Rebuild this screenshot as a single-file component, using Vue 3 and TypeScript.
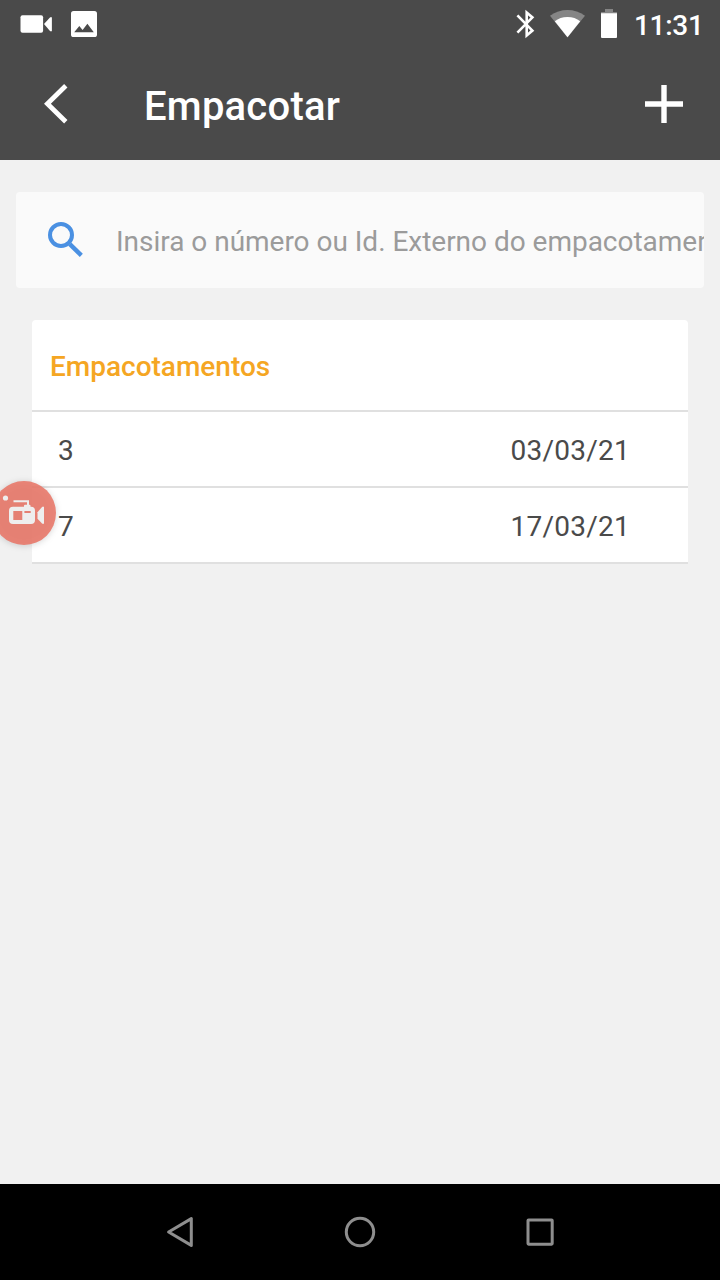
<script setup lang="ts">
interface Packing {
  id: number
  date: string
}

const packings: Packing[] = [
  { id: 3, date: '03/03/21' },
  { id: 7, date: '17/03/21' },
]
</script>

<template>
  <div class="screen">
    <div class="status">
      <div class="status-group notices">
        <svg width="32" height="20" viewBox="20 14 32 20" fill="#fff">
          <rect x="20.5" y="15.2" width="22.6" height="17.6" rx="2" />
          <path d="M44 24 50.2 17.2H51.9V31.3H50.2Z" />
        </svg>
        <svg width="26" height="26" viewBox="71 11 26 26">
          <rect x="71" y="11" width="26" height="26" rx="2.6" fill="#fff" />
          <path d="M74.2 32.2 79.3 26 82.6 30 87.4 23.8 93.8 32.2Z" fill="#4a4a4a" />
        </svg>
      </div>
      <div class="status-group system">
        <svg class="bluetooth" width="20" height="30" viewBox="516 9 20 30" fill="none" stroke="#fff" stroke-width="2.6">
          <path d="M517.4 15.4 532.4 30.6 526.7 35.5V12.5L532.4 17.4 517.4 32.6" />
        </svg>
        <svg class="wifi" width="36" height="28" viewBox="550 10 36 28">
          <path d="M567.5 37.5 550 15.8Q558 10 567.5 10T585 15.8Z" fill="#858585" />
          <path d="M567.5 37.2 554.8 21.3Q560 17 567.5 17T580.2 21.3Z" fill="#fff" />
        </svg>
        <svg class="battery" width="16" height="30" viewBox="601 9 16 30">
          <path d="M605 9H613V12H617V14H601V12H605Z" fill="#858585" />
          <path d="M601 13.3H617V37Q617 38 616 38H602Q601 38 601 37Z" fill="#fff" />
        </svg>
        <span class="clock">11:31</span>
      </div>
    </div>

    <header class="toolbar">
      <svg width="24" height="40" viewBox="44 84 24 40" fill="none" stroke="#fff" stroke-width="4.8">
        <path d="M65.8 85.8 47.4 103.8 65.8 121.8" />
      </svg>
      <h1>Empacotar</h1>
      <svg width="38" height="38" viewBox="0 0 38 38" fill="#fff">
        <path d="M16.3 0H21.7V16.3H38V21.7H21.7V38H16.3V21.7H0V16.3H16.3Z" />
      </svg>
    </header>

    <main>
      <div class="search">
        <svg width="36" height="36" viewBox="48 222 36 36" fill="none" stroke="#4a90e2" stroke-width="4">
          <circle cx="61" cy="235" r="11" />
          <path d="M69.8 244.2 81.3 255.4" stroke-width="4.4" />
        </svg>
        <span class="hint">Insira o número ou Id. Externo do empacotamento</span>
      </div>

      <section class="card">
        <h2>Empacotamentos</h2>
        <div v-for="item in packings" :key="item.id" class="row">
          <span>{{ item.id }}</span>
          <span>{{ item.date }}</span>
        </div>
      </section>
    </main>

    <svg class="recorder" width="64" height="76" viewBox="-8 475 64 76">
      <circle cx="24" cy="513" r="32" fill="#e87566" fill-opacity="0.88" />
      <circle cx="5.5" cy="498" r="2.6" fill="#eeeeee" />
      <path d="M13.5 501.2H28V506" fill="none" stroke="#eeeeee" stroke-width="2" />
      <path
        fill="#eeeeee"
        fill-rule="evenodd"
        d="M13 506.7H24V505.7Q24 504.7 25 504.7H29.5Q30.5 504.7 30.5 505.7V506.7H31Q35 506.7 35 510.7V520Q35 524 31 524H13Q9 524 9 520V510.7Q9 506.7 13 506.7ZM13.3 511V520H22.3V511ZM24.4 511V513H30.7V511Z"
      />
      <path d="M37.5 512.3 42.3 506.8H44V523.8H42.3L37.5 518.8Z" fill="#eeeeee" />
    </svg>

    <nav class="system-nav">
      <svg width="32" height="32" viewBox="164 1216 32 32">
        <path d="M168.6 1232 191.3 1218.6V1245.4Z" />
      </svg>
      <svg width="32" height="32" viewBox="344 1216 32 32">
        <circle cx="360" cy="1232" r="13.7" />
      </svg>
      <svg width="32" height="32" viewBox="524 1216 32 32">
        <rect x="528" y="1220" width="24.2" height="24.2" rx="0.6" />
      </svg>
    </nav>
  </div>
</template>

<style>
body {
  margin: 0;
}
</style>

<style scoped>
.screen {
  position: relative;
  display: flex;
  flex-direction: column;
  width: 720px;
  height: 1280px;
  overflow: hidden;
  background: #f1f1f1;
  font-family: Roboto, sans-serif;
}

svg {
  display: block;
  flex: none;
}

.status {
  display: flex;
  justify-content: space-between;
  height: 48px;
  box-sizing: border-box;
  padding: 0 18px 0 20px;
  background: #4a4a4a;
}

.status-group {
  display: flex;
  align-items: center;
}

.notices {
  gap: 19px;
}

.wifi {
  margin-left: 14px;
}

.battery {
  margin-left: 15px;
}

.clock {
  width: 68px;
  margin-left: 17px;
  padding-top: 3px;
  color: #fff;
  font-size: 28px;
  font-weight: 500;
  line-height: 32px;
  letter-spacing: -0.3px;
  white-space: nowrap;
}

.toolbar {
  display: flex;
  align-items: center;
  height: 112px;
  box-sizing: border-box;
  padding: 0 37px 0 44px;
  background: #4a4a4a;
}

h1 {
  flex: 1;
  margin: 0 0 0 76px;
  padding-top: 6px;
  color: #fff;
  font-size: 40px;
  font-weight: 500;
  line-height: 48px;
  letter-spacing: 0.22px;
}

main {
  flex: 1;
  padding: 32px 16px;
}

.search {
  display: flex;
  align-items: center;
  height: 96px;
  box-sizing: border-box;
  padding-left: 32px;
  overflow: hidden;
  border-radius: 4px;
  background: #fafafa;
}

.hint {
  margin-left: 32px;
  padding-top: 4px;
  color: #9b9b9b;
  font-size: 28px;
  line-height: 32px;
  letter-spacing: -0.02px;
  white-space: nowrap;
}

.card {
  margin: 32px 16px 0;
  border-radius: 4px 4px 0 0;
  background: #fff;
}

h2 {
  height: 92px;
  box-sizing: border-box;
  margin: 0;
  padding-left: 18px;
  border-bottom: 2px solid #e0e0e0;
  color: #f5a623;
  font-size: 28px;
  font-weight: 500;
  line-height: 94px;
}

.row {
  display: flex;
  justify-content: space-between;
  height: 76px;
  box-sizing: border-box;
  padding: 0 58px 0 26px;
  border-bottom: 2px solid #e0e0e0;
  color: #4a4a4a;
  font-size: 28px;
  line-height: 78px;
  letter-spacing: 0.25px;
}

.recorder {
  position: absolute;
  top: 475px;
  left: -8px;
  overflow: visible;
  filter: drop-shadow(0 1px 3px rgb(0 0 0 / 18%));
}

.system-nav {
  display: flex;
  align-items: center;
  justify-content: center;
  gap: 148px;
  height: 96px;
  background: #000;
}

.system-nav svg {
  fill: none;
  stroke: #8e8e8e;
  stroke-width: 3;
  stroke-linejoin: round;
}
</style>
